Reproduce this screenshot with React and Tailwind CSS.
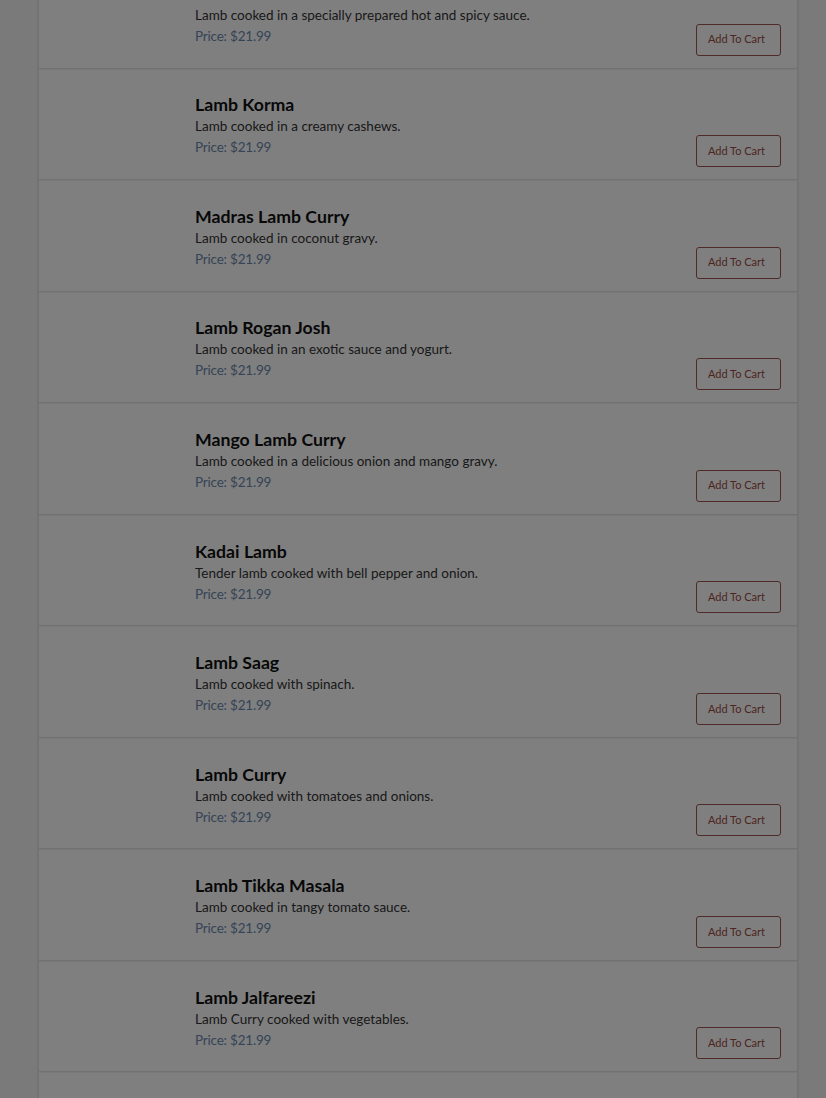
import React from 'react';

const items = [
  { name: 'Lamb Vindaloo', desc: 'Lamb cooked in a specially prepared hot and spicy sauce.' },
  { name: 'Lamb Korma', desc: 'Lamb cooked in a creamy cashews.' },
  { name: 'Madras Lamb Curry', desc: 'Lamb cooked in coconut gravy.' },
  { name: 'Lamb Rogan Josh', desc: 'Lamb cooked in an exotic sauce and yogurt.' },
  { name: 'Mango Lamb Curry', desc: 'Lamb cooked in a delicious onion and mango gravy.' },
  { name: 'Kadai Lamb', desc: 'Tender lamb cooked with bell pepper and onion.' },
  { name: 'Lamb Saag', desc: 'Lamb cooked with spinach.' },
  { name: 'Lamb Curry', desc: 'Lamb cooked with tomatoes and onions.' },
  { name: 'Lamb Tikka Masala', desc: 'Lamb cooked in tangy tomato sauce.' },
  { name: 'Lamb Jalfareezi', desc: 'Lamb Curry cooked with vegetables.' },
  { name: 'Lamb Biryani', desc: 'Basmati rice cooked with lamb and spices.' },
];

const MenuRow = ({ item }) => (
  <div className="flex h-[111.56px] border-b border-[#e2e2e2] shadow-[0_1px_0_#f2f2f2]">
    <div className="w-[156px] shrink-0" />
    <div className="flex flex-1 flex-col justify-center pt-[4px]">
      <h3 className="text-[17.7px] font-bold leading-[22px] text-[#111]">{item.name}</h3>
      <p className="text-[13.5px] leading-[20px] text-[#333]">{item.desc}</p>
      <p className="mt-[1px] text-[13.5px] leading-[20px] tracking-[-0.2px] text-[#6c88ad]">Price: $21.99</p>
    </div>
    <div className="flex items-end pb-[12px] pr-[16px]">
      <button className="h-[32px] w-[85px] rounded-[3px] border border-[#9c5650] bg-white pr-[4px] text-[11px] text-[#9a4a42]">
        Add To Cart
      </button>
    </div>
  </div>
);

export default function App() {
  return (
    <div className="relative h-[1098px] overflow-hidden bg-[#f5f5f5]" style={{ fontFamily: 'Lato, "Noto Sans", sans-serif' }}>
      <div className="ml-[38px] mt-[-43px] w-[760px] border-x border-[#e4e4e4] bg-white shadow-[0_0_2px_rgba(0,0,0,0.12)]">
        {items.map((item) => (
          <MenuRow key={item.name} item={item} />
        ))}
      </div>
      <div className="absolute inset-0 bg-black/50" />
    </div>
  );
}
